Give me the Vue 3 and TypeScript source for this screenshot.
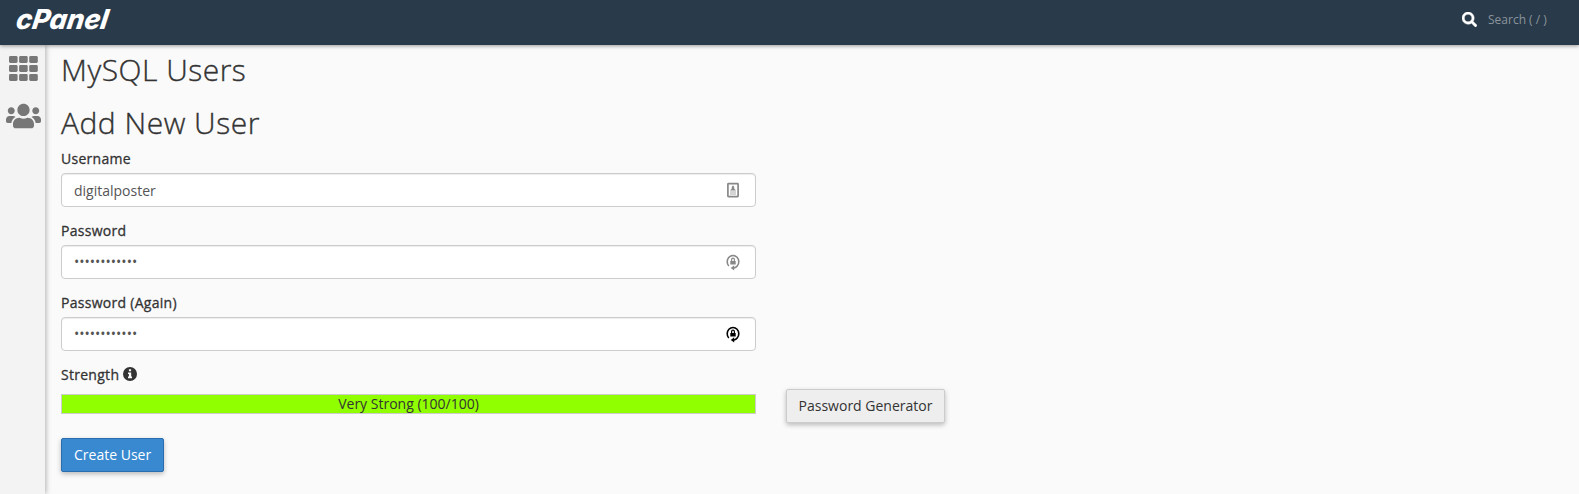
<script setup lang="ts">
import { ref } from 'vue'

const username = ref('digitalposter')
const password = ref('abcdefghijkl')
const confirmation = ref('abcdefghijkl')
const strength = ref(100)
const gridCells = [0, 1, 2].flatMap((row) => [0, 1, 2].map((col) => ({ row, col })))
</script>

<template>
  <div class="page">
    <header class="topbar">
      <svg class="logo" width="100" height="30" viewBox="0 0 100 30" aria-label="cPanel">
        <text class="wordmark" transform="translate(-1 24) skewX(-9)" x="0" y="0" textLength="92" lengthAdjust="spacingAndGlyphs">cPanel</text>
      </svg>
      <div class="search">
        <svg width="15" height="15" viewBox="0 0 512 512" fill="#fff" stroke="#fff" stroke-width="14">
          <path d="M505 442.700 405.300 343c-4.500-4.500-10.600-7-17-7H372c27.600-35.300 44-79.700 44-128C416 93.100 322.900 0 208 0S0 93.100 0 208s93.100 208 208 208c48.300 0 92.700-16.400 128-44v16.300c0 6.400 2.500 12.500 7 17l99.700 99.700c9.400 9.400 24.600 9.400 33.900 0l28.300-28.300c9.400-9.400 9.400-24.600.1-34zM208 336c-70.700 0-128-57.200-128-128 0-70.700 57.200-128 128-128 70.700 0 128 57.200 128 128 0 70.700-57.200 128-128 128z" />
        </svg>
        <span>Search ( / )</span>
      </div>
    </header>
    <div class="body">
      <nav class="sidebar">
        <svg class="grid-icon" width="29" height="25" viewBox="0 0 29 25" fill="#777">
          <rect v-for="c in gridCells" :key="`${c.row}-${c.col}`" :x="c.col * 10.100" :y="c.row * 9" width="8.600" height="7" rx="1.400" />
        </svg>
        <svg class="users-icon" width="35" height="28" viewBox="0 0 640 512" fill="#777">
          <path d="M96 224c35.300 0 64-28.700 64-64s-28.700-64-64-64-64 28.700-64 64 28.700 64 64 64zm448 0c35.300 0 64-28.700 64-64s-28.700-64-64-64-64 28.700-64 64 28.700 64 64 64zm32 32h-64c-17.600 0-33.500 7.100-45.100 18.600 40.300 22.100 68.900 62 75.100 109.400h66c17.700 0 32-14.300 32-32v-32c0-35.300-28.700-64-64-64zm-256 0c61.900 0 112-50.100 112-112S381.900 32 320 32 208 82.100 208 144s50.100 112 112 112zm76.800 32h-8.300c-20.800 10-43.900 16-68.500 16s-47.600-6-68.500-16h-8.300C179.600 288 128 339.600 128 403.200V432c0 26.500 21.500 48 48 48h288c26.500 0 48-21.500 48-48v-28.800c0-63.600-51.600-115.200-115.200-115.200zm-223.700-13.400C161.500 263.100 145.600 256 128 256H64c-35.300 0-64 28.700-64 64v32c0 17.700 14.300 32 32 32h65.900c6.300-47.400 34.900-87.300 75.200-109.400z" />
        </svg>
      </nav>
      <main class="content">
        <h1>MySQL Users</h1>
        <h2>Add New User</h2>
        <div class="group">
          <label>Username</label>
          <div class="field">
            <input v-model="username" class="text" type="text" />
            <svg class="field-icon" width="16" height="18" viewBox="0 0 16 18">
              <rect x="2.900" y="2.700" width="10.200" height="13" rx=".6" fill="none" stroke="#888" stroke-width="1.700" />
              <path d="M8 4.200l1.200 1.800v1.500l1.800 2H5l1.800-2V6z" fill="#888" />
              <path d="M5 11h6M5 13h6" stroke="#aaa" stroke-width="1" />
            </svg>
          </div>
        </div>
        <div class="group">
          <label>Password</label>
          <div class="field">
            <input v-model="password" type="password" />
            <svg class="field-icon muted" width="16" height="18" viewBox="0 0 16 18">
              <path d="M3.800 13A5.800 6.200 0 1 1 12.200 13Q11 14.500 9 15" fill="none" stroke="currentColor" stroke-width="1.600" />
              <path d="M9.200 12.300v5.200L5.700 15z" fill="currentColor" />
              <rect x="5.300" y="8" width="5.400" height="3.500" fill="currentColor" />
              <path d="M6.600 8V6.600a1.400 1.400 0 0 1 2.800 0V8" fill="none" stroke="currentColor" stroke-width="1.200" />
            </svg>
          </div>
        </div>
        <div class="group">
          <label>Password (Again)</label>
          <div class="field">
            <input v-model="confirmation" type="password" />
            <svg class="field-icon" width="16" height="18" viewBox="0 0 16 18">
              <path d="M3.800 13A5.800 6.200 0 1 1 12.200 13Q11 14.500 9 15" fill="none" stroke="currentColor" stroke-width="1.600" />
              <path d="M9.200 12.300v5.200L5.700 15z" fill="currentColor" />
              <rect x="5.300" y="8" width="5.400" height="3.500" fill="currentColor" />
              <path d="M6.600 8V6.600a1.400 1.400 0 0 1 2.800 0V8" fill="none" stroke="currentColor" stroke-width="1.200" />
            </svg>
          </div>
        </div>
        <div class="strength-label">
          <label>Strength</label>
          <svg width="14" height="14" viewBox="0 0 14 14">
            <circle cx="7" cy="7" r="7" fill="#333" />
            <path d="M5.900 2.200h2.200v2H5.900zM5 5.400h3.200v4.200H9v1.600H5V9.600h.900V7H5z" fill="#fafafa" />
          </svg>
        </div>
        <div class="strength-row">
          <div class="meter">
            <div class="meter-fill" :style="{ width: `${strength}%` }"></div>
            <span class="meter-text">Very Strong ({{ strength }}/100)</span>
          </div>
          <button class="btn generator" type="button">Password Generator</button>
        </div>
        <button class="btn create" type="button">Create User</button>
      </main>
    </div>
  </div>
</template>

<style>
body {
  margin: 0;
  background: #fafafa;
}
</style>

<style scoped>
.page {
  height: 494px;
  display: flex;
  flex-direction: column;
  overflow: hidden;
  background: #fafafa;
  color: #333;
  font: 14px/20px "Open Sans", "Noto Sans", sans-serif;
}
.page * {
  box-sizing: border-box;
}
.topbar {
  height: 45px;
  flex: none;
  display: flex;
  justify-content: space-between;
  background: #293a4a;
  box-shadow: 0 1px 4px rgba(0, 0, 0, 0.4);
  z-index: 2;
}
.logo {
  margin: 5px 0 0 16px;
  overflow: visible;
}
.wordmark {
  font: italic 800 27.5px Inter, "Open Sans", sans-serif;
  fill: #fff;
}
.search {
  width: 117px;
  height: 39px;
  display: flex;
  align-items: center;
  gap: 11px;
  font-size: 12px;
  color: #8b949c;
}
.search svg {
  margin-bottom: 1px;
}
.body {
  flex: 1;
  display: flex;
}
.sidebar {
  width: 45px;
  flex: none;
  display: flex;
  flex-direction: column;
  background: #f3f3f3;
  box-shadow: 1px 0 5px rgba(0, 0, 0, 0.3);
}
.grid-icon {
  margin: 11px 0 0 9px;
}
.users-icon {
  margin: 21px 0 0 6px;
}
.content {
  flex: 1;
  padding: 8px 0 0 16px;
}
h1,
h2 {
  margin: 0;
  font-size: 30px;
  line-height: 33px;
  font-weight: 300;
  letter-spacing: 0.5px;
  -webkit-text-stroke: 0.35px #333;
}
h2 {
  margin: 20px 0 10px;
}
.group {
  width: 695px;
  height: 72px;
}
label {
  display: block;
  height: 24px;
  letter-spacing: 0.28px;
  -webkit-text-stroke: 0.3px #333;
}
.field {
  display: flex;
  align-items: center;
  height: 34px;
  padding: 0 14px 0 12px;
  background: #fff;
  border: 1px solid #ccc;
  border-radius: 4px;
  box-shadow: inset 0 1px 1px rgba(0, 0, 0, 0.075);
}
input {
  flex: 1;
  border: 0;
  padding: 0;
  outline: 0;
  background: none;
  font: inherit;
  color: #555;
}
input.text {
  padding-top: 2px;
}
.field-icon {
  color: #000;
}
.field-icon.muted {
  color: #888;
}
.strength-label {
  display: flex;
  gap: 4px;
  height: 24px;
}
.strength-label svg {
  margin-top: 2px;
}
.strength-row {
  display: flex;
  gap: 30px;
  height: 49px;
}
.meter {
  width: 695px;
  height: 20px;
  margin-top: 5px;
  display: grid;
  border: 1px solid #ccc;
}
.meter-fill,
.meter-text {
  grid-area: 1 / 1;
  height: 18px;
}
.meter-fill {
  background: #90ff00;
}
.meter-text {
  text-align: center;
  line-height: 18px;
}
.btn {
  height: 34px;
  padding: 0 12px;
  border: 1px solid #ccc;
  border-radius: 2px;
  background: #eee;
  box-shadow: 0 2px 5px rgba(0, 0, 0, 0.26);
  font: inherit;
  color: #333;
  white-space: nowrap;
}
.generator {
  width: 159px;
  padding: 0;
}
.create {
  border-color: #2a6eb0;
  background: #3889d0;
  color: #fff;
}
</style>
